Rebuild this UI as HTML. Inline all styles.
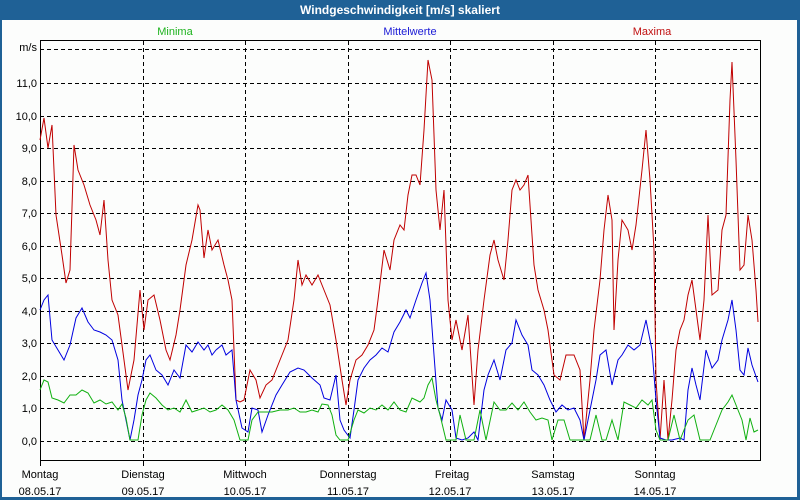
<!DOCTYPE html>
<html><head><meta charset="utf-8"><style>
body{margin:0;width:800px;height:500px;overflow:hidden;background:#1f6196;font-family:"Liberation Sans",sans-serif}
#w{position:absolute;left:2px;top:20px;width:795px;height:477px;background:#fcfdfc}
#t{position:absolute;left:0;top:0;width:800px;height:20px;color:#fff;font-weight:bold;font-size:12px;text-align:center;line-height:21px}
svg{position:absolute;left:0;top:0}
text{font-family:"Liberation Sans",sans-serif;font-size:11px}
</style></head><body>
<div id="t">Windgeschwindigkeit [m/s] skaliert</div>
<div id="w"></div>
<svg width="800" height="500">
<g stroke="#000" stroke-dasharray="4,3" stroke-width="1">
<line x1="40" y1="49.5" x2="758" y2="49.5"/><line x1="40" y1="83.5" x2="758" y2="83.5"/><line x1="40" y1="116.5" x2="758" y2="116.5"/><line x1="40" y1="148.5" x2="758" y2="148.5"/><line x1="40" y1="181.5" x2="758" y2="181.5"/><line x1="40" y1="213.5" x2="758" y2="213.5"/><line x1="40" y1="246.5" x2="758" y2="246.5"/><line x1="40" y1="278.5" x2="758" y2="278.5"/><line x1="40" y1="311.5" x2="758" y2="311.5"/><line x1="40" y1="343.5" x2="758" y2="343.5"/><line x1="40" y1="376.5" x2="758" y2="376.5"/><line x1="40" y1="408.5" x2="758" y2="408.5"/><line x1="40" y1="441.5" x2="758" y2="441.5"/>
<line x1="143.5" y1="41" x2="143.5" y2="460"/><line x1="245.5" y1="41" x2="245.5" y2="460"/><line x1="348.5" y1="41" x2="348.5" y2="460"/><line x1="450.5" y1="41" x2="450.5" y2="460"/><line x1="553.5" y1="41" x2="553.5" y2="460"/><line x1="655.5" y1="41" x2="655.5" y2="460"/>
</g>
<rect x="40.5" y="40.5" width="720" height="420" fill="none" stroke="#000"/>
<g stroke="#000"><line x1="40.5" y1="460" x2="40.5" y2="466"/><line x1="143.5" y1="460" x2="143.5" y2="466"/><line x1="245.5" y1="460" x2="245.5" y2="466"/><line x1="348.5" y1="460" x2="348.5" y2="466"/><line x1="450.5" y1="460" x2="450.5" y2="466"/><line x1="553.5" y1="460" x2="553.5" y2="466"/><line x1="655.5" y1="460" x2="655.5" y2="466"/></g>
<g text-anchor="end" fill="#000"><text x="37" y="51">m/s</text><text x="37" y="87">11,0</text><text x="37" y="120">10,0</text><text x="37" y="152">9,0</text><text x="37" y="185">8,0</text><text x="37" y="217">7,0</text><text x="37" y="250">6,0</text><text x="37" y="282">5,0</text><text x="37" y="315">4,0</text><text x="37" y="347">3,0</text><text x="37" y="380">2,0</text><text x="37" y="412">1,0</text><text x="37" y="445">0,0</text></g>
<g text-anchor="middle"><text x="175" y="35" fill="#1db31d">Minima</text><text x="410" y="35" fill="#1a1ad6">Mittelwerte</text><text x="652" y="35" fill="#c01010">Maxima</text></g>
<g text-anchor="middle" fill="#000">
<text x="40" y="478">Montag</text><text x="40" y="495">08.05.17</text>
<text x="143" y="478">Dienstag</text><text x="143" y="495">09.05.17</text>
<text x="245" y="478">Mittwoch</text><text x="245" y="495">10.05.17</text>
<text x="348" y="478">Donnerstag</text><text x="348" y="495">11.05.17</text>
<text x="452" y="478">Freitag</text><text x="450" y="495">12.05.17</text>
<text x="553" y="478">Samstag</text><text x="553" y="495">13.05.17</text>
<text x="655" y="478">Sonntag</text><text x="655" y="495">14.05.17</text>
</g>
<g fill="none" stroke-width="1">
<polyline stroke="#c00000" points="40,140 44,118 48,148 52,125 56,215 62,255 66,283 70,270 74,145 78,170 84,185 90,205 96,220 100,235 104,200 108,260 112,300 118,315 122,345 128,390 134,360 140,290 144,330 148,300 154,295 160,320 166,350 170,360 176,335 180,310 186,265 192,240 198,205 200,210 204,258 208,230 212,250 218,240 224,265 228,280 232,300 236,400 240,402 244,400 250,370 256,380 260,398 266,385 272,380 280,360 288,340 294,300 298,260 302,285 306,275 312,285 318,275 324,290 330,305 336,340 342,380 346,405 350,380 356,360 362,355 368,345 374,330 378,300 384,250 390,270 394,240 400,225 404,230 408,195 412,175 416,175 420,185 424,130 428,60 432,80 436,190 440,230 444,190 448,300 452,340 456,320 462,350 468,315 474,405 478,350 484,300 490,255 494,240 498,260 504,280 508,240 512,190 516,180 520,190 524,185 528,175 534,265 538,290 544,310 548,330 554,375 560,380 566,355 574,355 580,370 584,440 590,380 594,330 600,280 604,230 608,195 612,220 614,330 618,260 622,220 628,230 632,250 636,225 642,170 646,130 650,180 654,250 656,380 660,440 664,380 668,440 672,400 676,350 680,330 684,320 688,295 692,280 696,310 700,340 704,300 708,215 712,295 718,290 722,230 726,215 730,100 732,62 736,160 740,270 744,265 748,215 752,240 756,290 758,322"/>
<polyline stroke="#0000e0" points="40,310 44,300 48,295 52,340 58,350 64,360 70,345 76,318 82,308 88,322 94,330 100,332 106,335 112,340 118,360 122,400 126,420 130,440 134,420 138,395 142,380 146,360 150,355 156,370 162,375 168,385 174,370 180,378 186,345 192,352 198,342 204,350 208,345 212,355 216,350 222,345 226,355 232,350 236,400 242,428 248,432 252,408 258,410 262,432 268,415 276,395 282,385 290,372 298,368 304,370 312,378 320,385 324,398 330,400 336,375 340,420 344,430 350,438 354,410 358,380 364,368 370,360 376,355 382,348 388,352 394,332 400,322 406,310 410,318 416,300 422,283 426,273 430,300 434,355 438,408 442,420 446,400 452,410 456,438 462,440 468,438 474,432 478,440 484,390 488,375 494,360 500,380 506,350 512,343 516,320 522,335 528,345 532,370 538,375 544,385 550,400 556,412 562,405 568,410 574,408 580,420 584,440 590,410 596,380 600,355 606,350 612,385 618,360 622,355 628,345 634,350 640,345 646,320 652,350 656,400 660,438 666,440 672,440 680,438 684,440 688,390 692,368 696,385 700,400 706,350 712,368 718,360 722,340 728,320 732,300 736,330 740,370 744,375 748,348 752,365 758,382"/>
<polyline stroke="#10b010" points="40,390 44,380 48,382 52,398 58,400 64,403 70,395 76,395 82,390 88,393 94,403 100,400 106,404 112,402 118,410 122,404 126,418 130,440 138,440 142,415 146,400 150,393 156,398 162,405 168,410 174,408 180,412 186,400 192,412 198,410 204,408 210,412 216,410 222,405 228,410 234,420 240,440 248,440 252,420 258,412 264,412 272,412 280,410 288,410 294,408 300,412 306,412 312,410 318,412 322,404 328,405 332,415 336,435 340,440 348,440 354,420 358,410 364,413 370,408 376,410 382,405 388,410 394,402 400,410 406,412 412,398 416,400 420,402 424,398 428,385 432,378 436,400 440,415 446,440 456,440 460,415 466,440 474,440 480,410 486,440 494,402 500,410 506,410 512,403 518,410 524,402 530,412 536,420 542,418 548,420 552,440 558,420 564,420 570,440 590,440 596,415 602,440 606,440 612,420 618,440 624,402 630,405 636,408 642,400 648,405 652,400 656,430 660,440 668,440 674,415 680,440 688,420 694,415 700,440 710,440 716,425 722,410 728,402 732,395 738,410 742,420 746,440 750,418 754,432 758,430"/>
</g>
</svg>
</body></html>
